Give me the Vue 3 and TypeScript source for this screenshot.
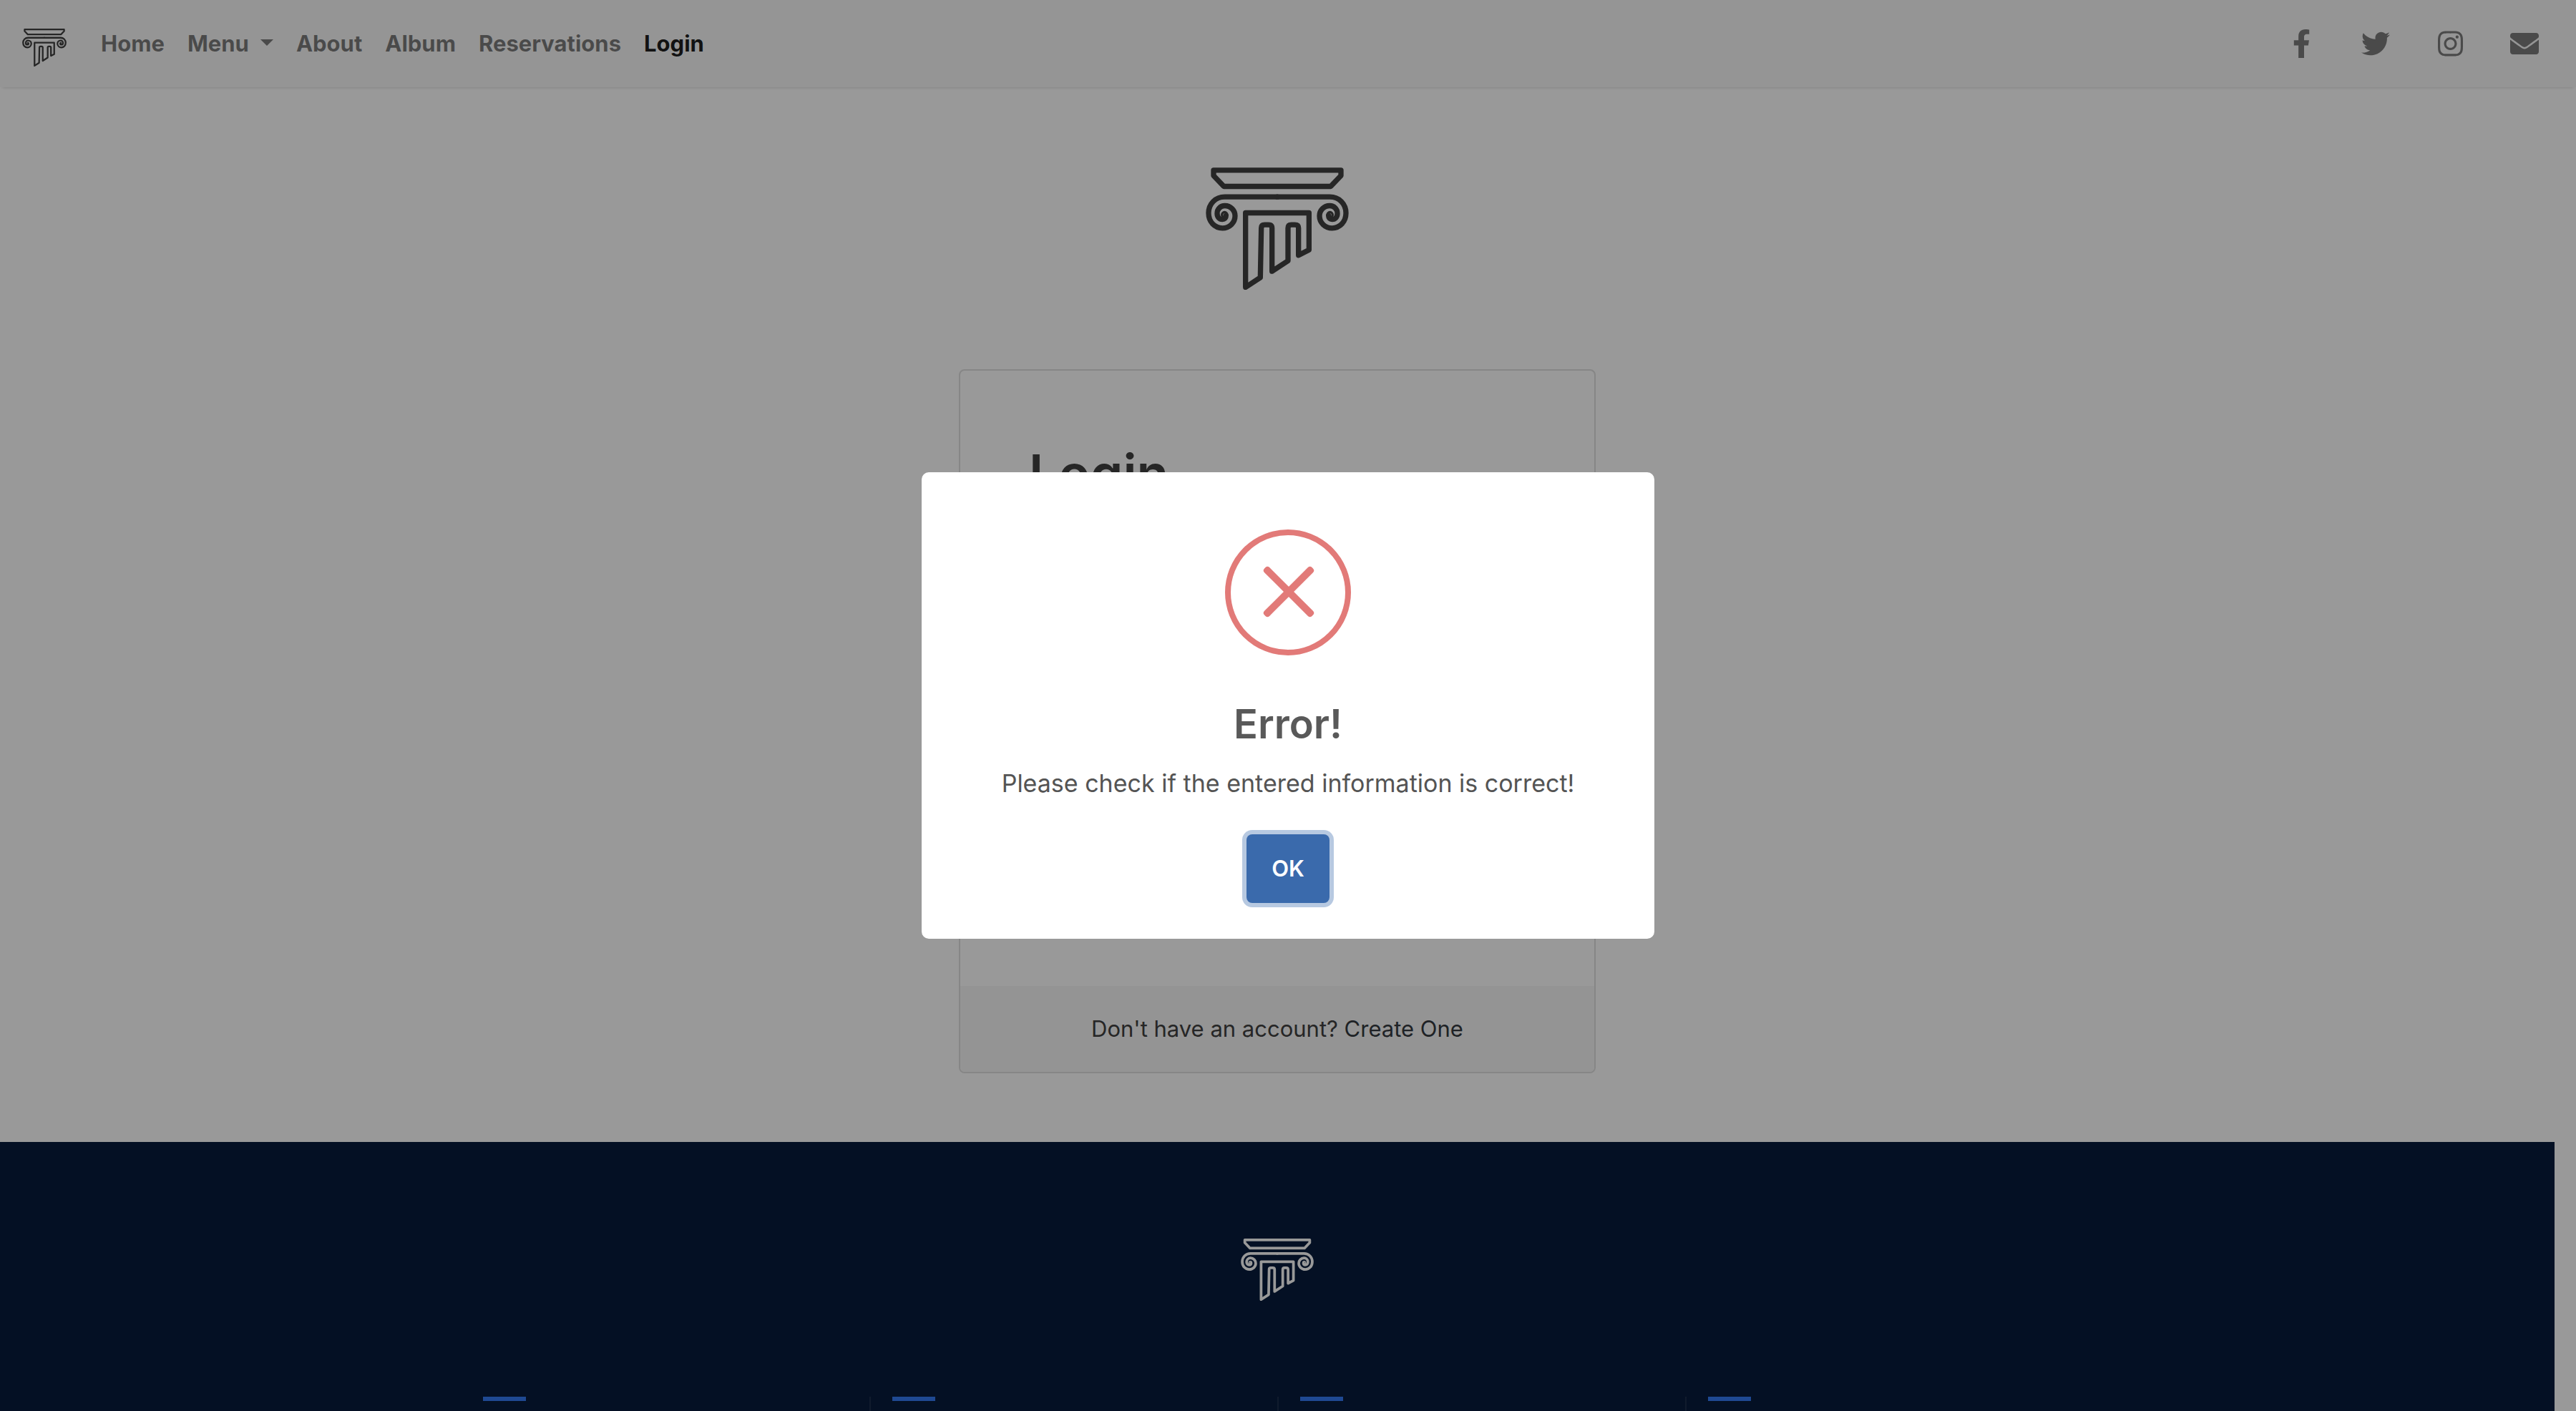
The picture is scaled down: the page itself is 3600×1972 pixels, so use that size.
<script setup lang="ts">
import { ref, h, type FunctionalComponent } from 'vue'

interface NavItem {
  label: string
  active?: boolean
  dropdown?: boolean
}

interface SocialLink {
  name: string
  viewBox: string
  path: string
}

const navItems: NavItem[] = [
  { label: 'Home' },
  { label: 'Menu', dropdown: true },
  { label: 'About' },
  { label: 'Album' },
  { label: 'Reservations' },
  { label: 'Login', active: true },
]

const socialLinks: SocialLink[] = [
  {
    name: 'Facebook',
    viewBox: '0 0 320 512',
    path: 'M279.14 288l14.22-92.66h-88.91v-60.13c0-25.35 12.42-50.06 52.24-50.06h40.42V6.26S260.43 0 225.36 0c-73.22 0-121.08 44.38-121.08 124.72v70.62H22.89V288h81.39v224h100.17V288z',
  },
  {
    name: 'Twitter',
    viewBox: '0 0 512 512',
    path: 'M459.37 151.716c.325 4.548.325 9.097.325 13.645 0 138.72-105.583 298.558-298.558 298.558-59.452 0-114.68-17.219-161.137-47.106 8.447.974 16.568 1.299 25.34 1.299 49.055 0 94.213-16.568 130.274-44.832-46.132-.975-84.792-31.188-98.112-72.772 6.498.974 12.995 1.624 19.818 1.624 9.421 0 18.843-1.3 27.614-3.573-48.081-9.747-84.143-51.98-84.143-102.985v-1.299c13.969 7.797 30.214 12.67 47.431 13.319-28.264-18.843-46.781-51.005-46.781-87.391 0-19.492 5.197-37.36 14.294-52.954 51.655 63.675 129.3 105.258 216.365 109.807-1.624-7.797-2.599-15.918-2.599-24.04 0-57.828 46.782-104.934 104.934-104.934 30.213 0 57.502 12.67 76.67 33.137 23.715-4.548 46.456-13.32 66.599-25.34-7.798 24.366-24.366 44.833-46.132 57.827 21.117-2.273 41.584-8.122 60.426-16.243-14.292 20.791-32.161 39.308-52.628 54.253z',
  },
  {
    name: 'Instagram',
    viewBox: '0 0 448 512',
    path: 'M224.1 141c-63.6 0-114.9 51.3-114.9 114.9s51.3 114.9 114.9 114.9S339 319.5 339 255.9 287.7 141 224.1 141zm0 189.6c-41.1 0-74.7-33.5-74.7-74.7s33.5-74.7 74.7-74.7 74.7 33.5 74.7 74.7-33.6 74.7-74.7 74.7zm146.4-194.3c0 14.9-12 26.8-26.8 26.8-14.9 0-26.8-12-26.8-26.8s12-26.8 26.8-26.8 26.8 12 26.8 26.8zm76.1 27.2c-1.7-35.9-9.9-67.7-36.2-93.9-26.2-26.2-58-34.4-93.9-36.2-37-2.1-147.9-2.1-184.9 0-35.8 1.7-67.6 9.9-93.9 36.1s-34.4 58-36.2 93.9c-2.1 37-2.1 147.9 0 184.9 1.7 35.9 9.9 67.7 36.2 93.9s58 34.4 93.9 36.2c37 2.1 147.9 2.1 184.9 0 35.9-1.7 67.7-9.9 93.9-36.2 26.2-26.2 34.4-58 36.2-93.9 2.1-37 2.1-147.8 0-184.8zM398.8 388c-7.8 19.6-22.9 34.7-42.6 42.6-29.5 11.7-99.5 9-132.1 9s-102.7 2.6-132.1-9c-19.6-7.8-34.7-22.9-42.6-42.6-11.7-29.5-9-99.5-9-132.1s-2.6-102.7 9-132.1c7.8-19.6 22.9-34.7 42.6-42.6 29.5-11.7 99.5-9 132.1-9s102.7-2.6 132.1 9c19.6 7.8 34.7 22.9 42.6 42.6 11.7 29.5 9 99.5 9 132.1s2.7 102.7-9 132.1z',
  },
  {
    name: 'Email',
    viewBox: '0 0 512 512',
    path: 'M502.3 190.8c3.9-3.1 9.7-.2 9.7 4.7V400c0 26.5-21.5 48-48 48H48c-26.5 0-48-21.5-48-48V195.6c0-5 5.7-7.8 9.7-4.7 22.4 17.4 52.1 39.5 154.1 113.6 21.1 15.4 56.7 47.8 92.2 47.6 35.7.3 72-32.8 92.3-47.6 102-74.1 131.6-96.3 154-113.7zM256 320c23.2.4 56.6-29.2 73.4-41.4 132.7-96.3 142.8-104.7 173.4-128.7 5.8-4.5 9.2-11.5 9.2-18.9v-19c0-26.5-21.5-48-48-48H48c-26.5 0-48 21.5-48 48v19c0 7.4 3.4 14.3 9.2 18.9 30.6 23.9 40.7 32.4 173.4 128.7 16.8 12.2 50.2 41.8 73.4 41.4z',
  },
]

// One volute of the capital; the other side is its mirror image.
const volute =
  'M375 196H155C115 196 87 226 87 264C87 300 112 327 145 327C175 327 198 304 198 276C198 252 179 233 155 233C137 233 123 247 123 265C123 280 132 290 145 290C154 290 160 284 160 275'

const ColumnLogo: FunctionalComponent = () =>
  h(
    'svg',
    {
      viewBox: '75 73 600 512',
      fill: 'none',
      stroke: 'currentColor',
      'stroke-width': 22,
      'stroke-linecap': 'round',
      'stroke-linejoin': 'round',
      'aria-hidden': 'true',
    },
    [
      h('path', { d: 'M108 84H642V107L599 152H151L108 107Z' }),
      h('path', { d: volute }),
      h('circle', { cx: 154, cy: 271, r: 5 }),
      h('path', { d: volute, transform: 'matrix(-1 0 0 1 750 0)' }),
      h('circle', { cx: 596, cy: 271, r: 5 }),
      h('path', {
        d: 'M242 263V575L304 534L308 327Q308 313 322 313H338Q353 313 353 327V508L420 464V327Q420 313 434 313H449Q464 313 464 327V441L508 418V263Z',
      }),
    ],
  )
ColumnLogo.displayName = 'ColumnLogo'

const showError = ref(true)
</script>

<template>
  <div class="page">
    <nav class="navbar">
      <a class="brand" href="#" aria-label="Home page"><ColumnLogo class="brand-logo" /></a>
      <ul class="nav-list">
        <li v-for="item in navItems" :key="item.label">
          <a href="#" class="nav-link" :class="{ active: item.active, dropdown: item.dropdown }">{{ item.label }}</a>
        </li>
      </ul>
      <ul class="social-list">
        <li v-for="link in socialLinks" :key="link.name">
          <a href="#" class="social-link" :aria-label="link.name">
            <svg :viewBox="link.viewBox" fill="currentColor" aria-hidden="true"><path :d="link.path" /></svg>
          </a>
        </li>
      </ul>
    </nav>

    <div class="content">
      <main class="main">
        <ColumnLogo class="hero-logo" />
        <section class="card">
          <div class="card-body">
            <h1 class="card-title">Login</h1>
          </div>
          <div class="card-footer">
            <span>Don't have an account? <a href="#" class="create-link">Create One</a></span>
          </div>
        </section>
      </main>

      <footer class="footer">
        <ColumnLogo class="footer-logo" />
        <div class="footer-columns">
          <div v-for="n in 4" :key="n" class="footer-column"><span class="accent"></span></div>
        </div>
      </footer>
    </div>

    <div v-if="showError" class="overlay">
      <div class="modal" role="alertdialog" aria-labelledby="modal-title" aria-describedby="modal-text">
        <svg class="error-icon" viewBox="0 0 176 176" aria-hidden="true">
          <circle cx="88" cy="88" r="84" fill="none" stroke="currentColor" stroke-width="8" />
          <g fill="currentColor">
            <rect x="42" y="82" width="94" height="10" rx="4" transform="rotate(45 89 87)" />
            <rect x="42" y="82" width="94" height="10" rx="4" transform="rotate(-45 89 87)" />
          </g>
        </svg>
        <h2 id="modal-title" class="modal-title">Error!</h2>
        <p id="modal-text" class="modal-text">Please check if the entered information is correct!</p>
        <button type="button" class="confirm" @click="showError = false">OK</button>
      </div>
    </div>
  </div>
</template>

<style>
body {
  background: #fff;
}
</style>

<style scoped>
.page {
  height: 100vh;
  overflow: hidden;
  font-family: Inter, "Liberation Sans", sans-serif;
  font-size: 31px;
  line-height: 48px;
  color: #404040;
}

a {
  color: inherit;
  text-decoration: none;
}

ul {
  display: flex;
  margin: 0;
  padding: 0;
  list-style: none;
}

.navbar {
  display: flex;
  align-items: center;
  height: 122px;
  padding: 0 52px 0 31px;
  box-sizing: border-box;
  background: #f8f8f8;
  box-shadow: 0 4px 4px -4px rgba(0, 0, 0, 0.2);
}

.brand {
  display: flex;
  margin-top: 10px;
  margin-right: 32px;
}

.brand-logo {
  width: 62px;
  height: 53px;
}

.nav-link {
  display: block;
  padding: 0 16px;
  font-weight: 700;
  color: rgba(0, 0, 0, 0.5);
}

.nav-link.active {
  color: rgba(0, 0, 0, 0.9);
}

.dropdown::after {
  content: "";
  display: inline-block;
  margin-left: 16px;
  vertical-align: 8px;
  border-top: 9px solid;
  border-right: 9px solid transparent;
  border-left: 9px solid transparent;
}

.social-list {
  gap: 64px;
  margin-left: auto;
  color: rgba(0, 0, 0, 0.5);
}

.social-link {
  display: flex;
  justify-content: center;
  width: 40px;
}

.social-link svg {
  height: 40px;
}

.content {
  margin-right: 30px;
}

.main {
  display: flex;
  flex-direction: column;
  align-items: center;
  padding: 112px 0 96px;
}

.hero-logo {
  width: 200px;
  height: 171px;
}

.card {
  width: 890px;
  margin-top: 111px;
  box-sizing: border-box;
  border: 2px solid #dfdfdf;
  border-radius: 8px;
  overflow: hidden;
}

.card-body {
  min-height: 860px;
  padding: 96px;
  box-sizing: border-box;
}

.card-title {
  margin: 0;
  font-size: 73px;
  font-weight: 600;
  line-height: 96px;
}

.card-footer {
  padding: 36px;
  background: #f7f7f7;
  text-align: center;
}

.create-link {
  color: #343a40;
}

.footer {
  padding: 135px 0;
  background: #071c3c;
  color: #fff;
}

.footer-logo {
  display: block;
  width: 102px;
  height: 87px;
  margin: 0 auto 134px;
}

.footer-columns {
  display: grid;
  grid-template-columns: repeat(4, 1fr);
  width: 2280px;
  margin: 0 auto;
}

.footer-column {
  min-height: 240px;
  padding: 0 30px;
  border-left: 2px solid #1b2e4c;
}

.footer-column:first-child {
  border-left: 0;
}

.accent {
  display: block;
  width: 60px;
  height: 6px;
  background: #347af3;
}

.overlay {
  position: fixed;
  inset: 0;
  display: flex;
  align-items: center;
  justify-content: center;
  background: rgba(0, 0, 0, 0.4);
}

.modal {
  display: flex;
  flex-direction: column;
  align-items: center;
  width: 1024px;
  padding: 80px 40px 50px;
  box-sizing: border-box;
  border-radius: 10px;
  background: #fff;
  color: #545454;
}

.error-icon {
  width: 176px;
  height: 176px;
  color: #e27a78;
}

.modal-title {
  margin: 60px 0 20px;
  font-size: 56px;
  font-weight: 600;
  line-height: 72px;
  color: #595959;
}

.modal-text {
  margin: 0 0 44px;
  font-size: 34px;
  line-height: 54px;
}

.confirm {
  width: 116px;
  height: 96px;
  padding: 0;
  border: 0;
  border-radius: 8px;
  background: #3a6aac;
  box-shadow: 0 0 0 6px #b7c9e1;
  font: 600 31px/48px Inter, "Liberation Sans", sans-serif;
  color: #fff;
}
</style>
